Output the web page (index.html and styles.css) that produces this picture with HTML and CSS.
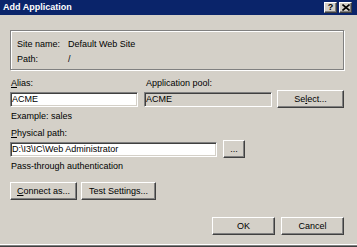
FILE: index.html
```html
<!DOCTYPE html>
<html>
<head>
<meta charset="utf-8">
<link rel="stylesheet" href="styles.css">
</head>
<body>
<div class="window">
  <div class="titlebar">
    <span class="title">Add Application</span>
    <div class="caption-buttons">
      <span class="cap-btn cap-help">?</span>
      <span class="cap-btn cap-close">
        <svg width="8" height="7" viewBox="0 0 8 7"><path d="M0.5 0.5 L7.5 6.5 M7.5 0.5 L0.5 6.5" stroke="#000" stroke-width="1.6" fill="none"/></svg>
      </span>
    </div>
  </div>
  <div class="content">
    <div class="group">
      <div class="info-row"><span class="info-label">Site name:</span><span>Default Web Site</span></div>
      <div class="info-row"><span class="info-label">Path:</span><span>/</span></div>
    </div>

    <div class="grid-top">
      <div class="label"><u>A</u>lias:</div>
      <div></div>
      <div class="label">Application pool:</div>
      <div></div>
      <div></div>
      <div class="field">ACME</div>
      <div></div>
      <div class="field disabled">ACME</div>
      <div></div>
      <div class="btn">Se<u>l</u>ect...</div>
    </div>

    <div class="label example">Example: sales</div>

    <div class="label phys-label"><u>P</u>hysical path:</div>
    <div class="phys-row">
      <div class="field phys-field">D:\I3\IC\Web Administrator</div>
      <div class="btn browse">...</div>
    </div>

    <div class="label pass">Pass-through authentication</div>

    <div class="conn-row">
      <div class="btn btn-connect"><u>C</u>onnect as...</div>
      <div class="btn btn-test">Test Settin<u>g</u>s...</div>
    </div>

    <div class="footer-row">
      <div class="btn btn-ok">OK</div>
      <div class="btn btn-cancel">Cancel</div>
    </div>
  </div>
  <div class="frame-bottom"></div>
</div>
</body>
</html>
```
FILE: styles.css
```css
html, body {
  margin: 0;
  padding: 0;
}
body {
  width: 357px;
  height: 247px;
  overflow: hidden;
  background: #d4d0c8;
  font-family: "Liberation Sans", Arial, sans-serif;
  font-size: 9px;
  color: #000;
}
.window {
  width: 357px;
  height: 247px;
  display: flex;
  flex-direction: column;
  background: #d4d0c8;
}
.titlebar {
  height: 15px;
  background: #0a246a;
  display: flex;
  align-items: center;
  justify-content: space-between;
  padding: 0 5px 0 3px;
  flex: none;
}
.title {
  color: #fff;
  font-weight: bold;
  font-size: 9px;
  line-height: 15px;
}
.caption-buttons {
  display: flex;
  gap: 2px;
}
.cap-btn {
  width: 11px;
  height: 9px;
  background: #d4d0c8;
  border: 1px solid;
  border-color: #fff #404040 #404040 #fff;
  box-shadow: inset -1px -1px #808080;
  display: flex;
  align-items: center;
  justify-content: center;
  font-weight: bold;
  font-size: 9px;
  line-height: 9px;
}
.content {
  flex: 1;
  padding: 15px 13px 0 10px;
  display: flex;
  flex-direction: column;
}
.group {
  height: 30px;
  border: 1px solid #808080;
  box-shadow: inset 1px 1px #fff, 1px 1px #fff;
  padding: 6px 6px 2px 6px;
}
.info-row {
  display: flex;
  height: 15px;
  line-height: 15px;
}
.info-label {
  width: 51px;
}
.label {
  line-height: 13px;
  height: 13px;
  padding-left: 1px;
  white-space: nowrap;
}
.grid-top {
  margin-top: 7px;
  display: grid;
  grid-template-columns: 128px 6px 128px 5px 67px;
  grid-template-rows: 13px 18px;
}
.grid-top .label:nth-child(3) {
  padding-left: 2px;
}
.field {
  height: 13px;
  line-height: 13px;
  padding: 0 1px;
  background: #fff;
  border: 1px solid;
  border-color: #808080 #fff #fff #808080;
  box-shadow: inset 1px 1px #404040, inset -1px -1px #d4d0c8;
  white-space: nowrap;
  overflow: hidden;
}
.grid-top .field {
  margin-top: 2px;
}
.field.disabled {
  background: #d4d0c8;
}
.btn {
  height: 16px;
  line-height: 16px;
  text-align: center;
  background: #d4d0c8;
  border: 1px solid;
  border-color: #fff #404040 #404040 #fff;
  box-shadow: inset -1px -1px #808080;
  white-space: nowrap;
  box-sizing: content-box;
}
.example {
  margin-top: 2px;
}
.phys-label {
  margin-top: 4px;
}
.phys-row {
  display: flex;
  gap: 6px;
  height: 18px;
}
.phys-field {
  width: 203px;
  margin-top: 2px;
}
.browse {
  width: 20px;
}
.pass {
  margin-top: 2px;
}
.conn-row {
  display: flex;
  gap: 4px;
  margin-top: 9px;
}
.btn-connect {
  width: 65px;
}
.btn-test {
  width: 73px;
}
.footer-row {
  display: flex;
  justify-content: flex-end;
  gap: 6px;
  margin-top: 17px;
}
.btn-ok, .btn-cancel {
  width: 61px;
}
.frame-bottom {
  flex: none;
  height: 1px;
  border-top: 1px solid #fff;
  background: #808080;
  border-bottom: 1px solid #404040;
}
```
